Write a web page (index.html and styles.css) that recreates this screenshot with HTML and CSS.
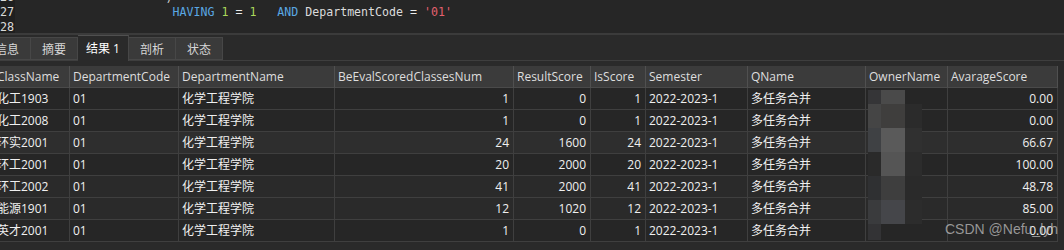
FILE: index.html
```html
<!DOCTYPE html>
<html lang="zh">
<head>
<meta charset="utf-8">
<title>Query result</title>
<link rel="stylesheet" href="styles.css">
</head>
<body>
<div class="editor">
  <div class="gutter">
    <div class="ln">26</div>
    <div class="ln">27</div>
    <div class="ln">28</div>
  </div>
  <div class="code">
    <div class="line">                     <span class="pl">)</span></div>
    <div class="line">                      <span class="kw">HAVING</span> <span class="num">1</span> <span class="op">=</span> <span class="num">1</span>   <span class="kw">AND</span> <span class="id">DepartmentCode</span> <span class="op">=</span> <span class="str">'01'</span></div>
    <div class="line"> </div>
  </div>
</div>
<div class="sep"></div>
<div class="panel">
  <div class="tabs">
    <div class="tab first">信息</div>
    <div class="tab">摘要</div>
    <div class="tab active">结果 1</div>
    <div class="tab">剖析</div>
    <div class="tab">状态</div>
    <div class="tab-rest"></div>
  </div>
  <div class="grid-wrap">
    <div class="grid">
      <div class="row hdr">
        <div class="hd">ClassName</div><div class="hd">DepartmentCode</div><div class="hd">DepartmentName</div><div class="hd">BeEvalScoredClassesNum</div><div class="hd">ResultScore</div><div class="hd">IsScore</div><div class="hd">Semester</div><div class="hd">QName</div><div class="hd">OwnerName</div><div class="hd">AvarageScore</div>
      </div>
      <div class="row tone-a">
        <div class="c">化工1903</div><div class="c">01</div><div class="c">化学工程学院</div><div class="c r">1</div><div class="c r">0</div><div class="c r">1</div><div class="c">2022-2023-1</div><div class="c">多任务合并</div><div class="c"></div><div class="c r">0.00</div>
      </div>
      <div class="row tone-a">
        <div class="c">化工2008</div><div class="c">01</div><div class="c">化学工程学院</div><div class="c r">1</div><div class="c r">0</div><div class="c r">1</div><div class="c">2022-2023-1</div><div class="c">多任务合并</div><div class="c"></div><div class="c r">0.00</div>
      </div>
      <div class="row tone-c">
        <div class="c">环实2001</div><div class="c">01</div><div class="c">化学工程学院</div><div class="c r">24</div><div class="c r">1600</div><div class="c r">24</div><div class="c">2022-2023-1</div><div class="c">多任务合并</div><div class="c"></div><div class="c r">66.67</div>
      </div>
      <div class="row tone-a">
        <div class="c">环工2001</div><div class="c">01</div><div class="c">化学工程学院</div><div class="c r">20</div><div class="c r">2000</div><div class="c r">20</div><div class="c">2022-2023-1</div><div class="c">多任务合并</div><div class="c"></div><div class="c r">100.00</div>
      </div>
      <div class="row tone-b">
        <div class="c">环工2002</div><div class="c">01</div><div class="c">化学工程学院</div><div class="c r">41</div><div class="c r">2000</div><div class="c r">41</div><div class="c">2022-2023-1</div><div class="c">多任务合并</div><div class="c"></div><div class="c r">48.78</div>
      </div>
      <div class="row tone-b">
        <div class="c">能源1901</div><div class="c">01</div><div class="c">化学工程学院</div><div class="c r">12</div><div class="c r">1020</div><div class="c r">12</div><div class="c">2022-2023-1</div><div class="c">多任务合并</div><div class="c"></div><div class="c r">85.00</div>
      </div>
      <div class="row tone-a">
        <div class="c">英才2001</div><div class="c">01</div><div class="c">化学工程学院</div><div class="c r">1</div><div class="c r">0</div><div class="c r">1</div><div class="c">2022-2023-1</div><div class="c">多任务合并</div><div class="c"></div><div class="c r">0.00</div>
      </div>
    </div>
    <div class="mosaic">
      <div class="m" style="background:#353537"></div><div class="m" style="background:#4a4a4a"></div><div class="m" style="background:transparent"></div>
      <div class="m" style="background:#454545"></div><div class="m" style="background:#3f3e3d"></div><div class="m" style="background:#2b2b2b"></div>
      <div class="m" style="background:#3f4144"></div><div class="m" style="background:#5a5a5a"></div><div class="m" style="background:#303030"></div>
      <div class="m" style="background:#2a2a2a"></div><div class="m" style="background:#555555"></div><div class="m" style="background:#2c2c2c"></div>
      <div class="m" style="background:#2f3032"></div><div class="m" style="background:#3e3e3e"></div><div class="m" style="background:#2a2a2a"></div>
      <div class="m" style="background:#3a3b3d"></div><div class="m" style="background:#45464a"></div><div class="m" style="background:#2c2c2c"></div>
      <div class="m" style="background:#333335"></div><div class="m" style="background:transparent"></div><div class="m" style="background:transparent"></div>
    </div>
    <div class="watermark">CSDN @Nefu_lyh</div>
  </div>
</div>
</body>
</html>
```

FILE: styles.css
```css
html, body {
  margin: 0;
  padding: 0;
}
body {
  width: 1064px;
  height: 250px;
  overflow: hidden;
  background: #2a2a2a;
  font-family: "Open Sans", "Noto Sans CJK SC", sans-serif;
  font-size: 12px;
  color: #f0f0f0;
}
.editor {
  height: 33px;
  display: flex;
  background: #262626;
  overflow: hidden;
}
.gutter {
  width: 15px;
  background: #1f1f1f;
  margin-top: -10px;
}
.ln {
  height: 15px;
  line-height: 15px;
  font-family: "DejaVu Sans Mono", monospace;
  font-size: 11.8px;
  color: #dadada;
  text-align: right;
  padding-right: 1px;
}
.code {
  flex: 1;
  margin-top: -10px;
  padding-left: 4px;
}
.line {
  height: 15px;
  line-height: 15px;
  white-space: pre;
  font-family: "DejaVu Sans Mono", monospace;
  font-size: 11.6px;
  color: #d8d8d8;
}
.kw { color: #5aa8e4; }
.num { color: #aad85a; }
.op { color: #ececec; }
.id { color: #dcdcdc; }
.str { color: #e4606e; }
.pl { color: #cfcfcf; }
.sep {
  height: 2px;
  background: #3b3b3b;
}
.panel {
  position: relative;
}
.tabs {
  display: flex;
  align-items: flex-end;
  height: 25px;
  border-bottom: 1px solid #3e3e3e;
  margin-left: -17px;
}
.tab {
  box-sizing: border-box;
  height: 23px;
  width: 47px;
  background: #3a3a3a;
  border: 1px solid #474747;
  border-left: none;
  color: #d6d6d6;
  display: flex;
  align-items: center;
  justify-content: center;
  font-family: "Noto Sans CJK SC", sans-serif;
  font-size: 12px;
}
.tab.first {
  width: 48px;
  border-left: 1px solid #474747;
}
.tab.active {
  width: 51px;
  height: 26px;
  background: #2a2a2a;
  border-top: 1px solid #505050;
  border-bottom: none;
  color: #ffffff;
  margin-bottom: -1px;
  padding-bottom: 2px;
  font-family: "Open Sans", "Noto Sans CJK SC", sans-serif;
}
.tab-rest { flex: 1; }
.grid-wrap {
  position: relative;
  margin-top: 5px;
}
.grid {
  margin-left: -6px;
  width: 1064px;
}
.row {
  display: grid;
  grid-template-columns: 76px 109px 156px 179px 77px 55px 102px 118px 82px 110px;
  height: 22px;
}
.hd, .c {
  box-sizing: border-box;
  border-right: 1px solid #3f3f3f;
  border-bottom: 1px solid #3f3f3f;
  padding: 0 4px 0 3px;
  line-height: 21px;
  white-space: nowrap;
  overflow: hidden;
}
.hd {
  background: #3b3b3b;
  color: #dedede;
  border-right-color: #505050;
  border-bottom-color: #4a4a4a;
}
.tone-a { background: #262626; }
.tone-b { background: #2a2a2a; }
.tone-c { background: #2e2e2e; }
.r { text-align: right; }
.mosaic {
  position: absolute;
  left: 868px;
  top: 24px;
  display: grid;
  grid-template-columns: 13px 24px 17px;
  grid-template-rows: 14px 24px 24px 24px 24px 24px 16px;
}
.watermark {
  position: absolute;
  left: 945px;
  top: 155px;
  font-family: "Liberation Sans", sans-serif;
  font-size: 14px;
  color: rgba(190, 190, 190, 0.75);
  white-space: nowrap;
}
```
